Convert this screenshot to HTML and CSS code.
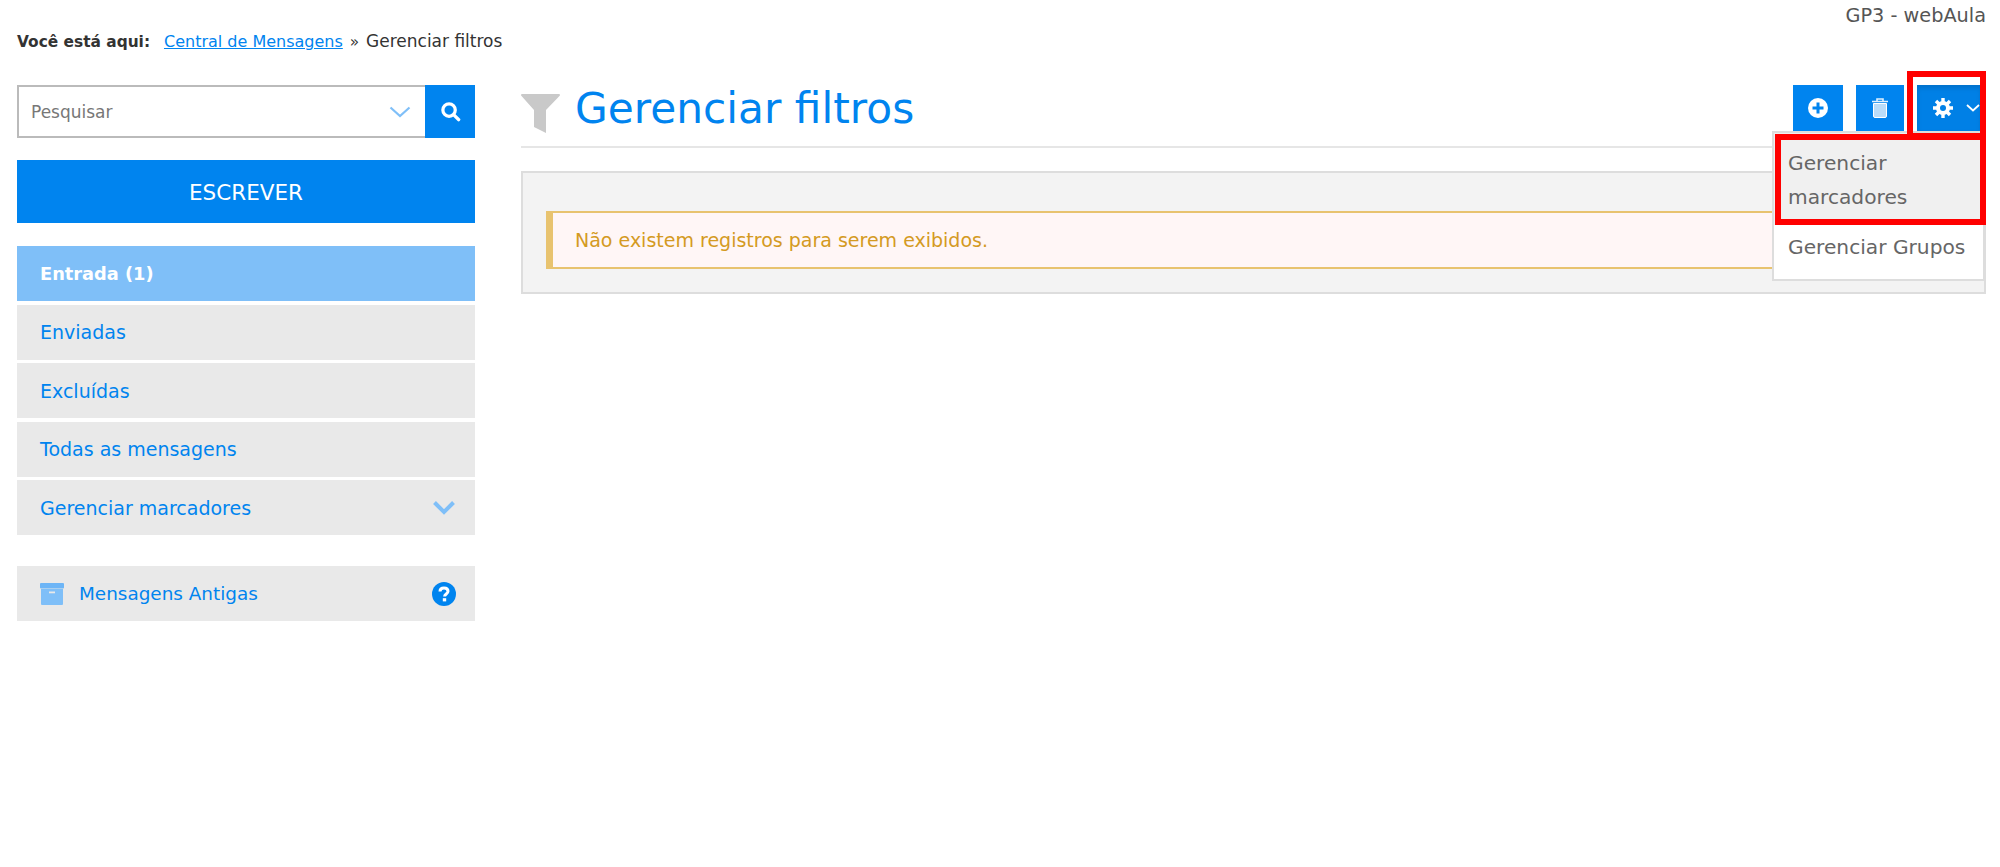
FILE: index.html
```html
<!DOCTYPE html>
<html lang="pt-BR">
<head>
    <meta charset="UTF-8">
    <meta name="viewport" content="width=device-width, initial-scale=1.0">
    <title>Gerenciar filtros</title>
    <link rel="stylesheet" href="styles.css">
</head>
<body>
    <div class="top-title">GP3 - webAula</div>
    <div class="breadcrumb">
        <strong>Você está aqui:</strong>
        <a href="#">Central de Mensagens</a>
        <span class="sep">»</span>
        <span class="current">Gerenciar filtros</span>
    </div>

    <div class="layout">
        <div class="sidebar">
            <div class="search">
                <div class="search-input">
                    <span>Pesquisar</span>
                    <svg class="search-arrow" width="22" height="12" viewBox="0 0 22 12"><path d="M1.5 1.5 L11 10 L20.5 1.5" fill="none" stroke="#7fbff8" stroke-width="2.2"/></svg>
                </div>
                <div class="search-btn">
                    <svg width="21" height="21" viewBox="0 0 22 22"><circle cx="9.5" cy="9.5" r="6.5" fill="none" stroke="#fff" stroke-width="3.4"/><path d="M14.5 14.5 L19.5 19.5" stroke="#fff" stroke-width="3.6" stroke-linecap="round"/></svg>
                </div>
            </div>

            <div class="write-btn">ESCREVER</div>

            <div class="menu">
                <div class="menu-item active">Entrada (1)</div>
                <div class="menu-item">Enviadas</div>
                <div class="menu-item">Excluídas</div>
                <div class="menu-item">Todas as mensagens</div>
                <div class="menu-item">
                    <span>Gerenciar marcadores</span>
                    <svg class="menu-arrow" width="24" height="16" viewBox="0 0 24 16"><path d="M2.5 2.5 L12 12 L21.5 2.5" fill="none" stroke="#7fbff8" stroke-width="4"/></svg>
                </div>
            </div>

            <div class="menu-item old">
                <svg class="box-icon" width="24" height="22" viewBox="0 0 24 22"><rect x="0" y="0" width="24" height="5.6" rx="1" fill="#6db5f6"/><path d="M1 6 H23 V21 a1 1 0 0 1 -1 1 H2 a1 1 0 0 1 -1 -1 Z" fill="#7fbff8"/><rect x="9" y="8.5" width="6" height="1.8" fill="#e9e9e9"/></svg>
                <span class="old-label">Mensagens Antigas</span>
                <svg class="help-icon" width="24" height="24" viewBox="0 0 24 24"><circle cx="12" cy="12" r="12" fill="#0084ef"/><path d="M8 9.5 C8 7 10 6 12 6 C14.5 6 16 7.5 16 9.3 C16 12 12.6 12 12.6 14.5" fill="none" stroke="#fff" stroke-width="3"/><rect x="10.8" y="16.2" width="3.4" height="3.2" fill="#fff"/></svg>
            </div>
        </div>

        <div class="main">
            <div class="page-head">
                <svg class="filter-icon" width="39" height="39" viewBox="0 0 39 39"><path d="M1 0 H38 a1 1 0 0 1 .7 1.7 L25 16 V39 L13 33 V16 L.3 1.7 A1 1 0 0 1 1 0 Z" fill="#c9c9c9"/></svg>
                <h1>Gerenciar filtros</h1>
                <div class="actions">
                    <div class="action-btn add">
                        <svg width="20" height="20" viewBox="0 0 20 20"><circle cx="10" cy="10" r="10" fill="#fff"/><path d="M10 4.5 V15.5 M4.5 10 H15.5" stroke="#0084ef" stroke-width="3"/></svg>
                    </div>
                    <div class="action-btn trash">
                        <svg width="18" height="20" viewBox="0 0 18 20"><path d="M1 3.5 H17 M6 3 V1 H12 V3" fill="none" stroke="#dff0fd" stroke-width="1.6"/><path d="M2.5 5.5 H15.5 V18 a1.5 1.5 0 0 1 -1.5 1.5 H4 a1.5 1.5 0 0 1 -1.5 -1.5 Z" fill="#b9dcf9" stroke="#fff" stroke-width="1"/></svg>
                    </div>
                    <div class="action-btn gear">
                        <svg width="20" height="20" viewBox="0 0 20 20"><circle cx="10" cy="10" r="5" fill="none" stroke="#fff" stroke-width="4"/><path d="M10 0 V20 M0 10 H20 M3 3 L17 17 M17 3 L3 17" stroke="#fff" stroke-width="3.4"/><circle cx="10" cy="10" r="3" fill="#0080e6"/></svg>
                        <svg width="14" height="8" viewBox="0 0 14 8"><path d="M1 1 L7 6.5 L13 1" fill="none" stroke="#fff" stroke-width="1.8"/></svg>
                    </div>
                </div>
            </div>

            <div class="panel">
                <div class="alert">Não existem registros para serem exibidos.</div>
            </div>
        </div>
    </div>

    <!-- dropdown aberto por cima da pagina -->
    <div class="dropdown">
        <div class="dropdown-item hover">Gerenciar marcadores</div>
        <div class="dropdown-item">Gerenciar Grupos</div>
    </div>

    <!-- marcacoes vermelhas do screenshot -->
    <div class="mark mark-gear"></div>
    <div class="mark mark-item"></div>
</body>
</html>
```

FILE: styles.css
```css
body {
    font-family: "DejaVu Sans", Arial, sans-serif;
    font-size: 15px;
    margin: 0;
    padding: 0 14px 0 17px;
    background-color: #fff;
    color: #333;
    height: 867px;
    box-sizing: border-box;
    overflow: hidden;
    position: relative;
}

.top-title {
    height: 30px;
    line-height: 31px;
    text-align: right;
    color: #555;
    font-size: 19.3px;
}

.breadcrumb {
    height: 22px;
    line-height: 22px;
    font-size: 15.4px;
    color: #333;
    white-space: nowrap;
}

.breadcrumb a {
    color: #0084ef;
    font-size: 16px;
    margin-left: 9px;
}

.breadcrumb .sep {
    margin: 0 2px;
}

.breadcrumb .current {
    font-size: 17px;
}

.layout {
    display: flex;
    margin-top: 33px;
    gap: 46px;
}

.sidebar {
    width: 458px;
    flex-shrink: 0;
}

.search {
    display: flex;
    height: 53px;
}

.search-input {
    flex: 1;
    display: flex;
    align-items: center;
    justify-content: space-between;
    border: 2px solid #bbb;
    border-right: none;
    padding: 0 14px 0 12px;
    color: #777;
    font-size: 17px;
}

.search-btn {
    width: 50px;
    background: #0084ef;
    display: flex;
    align-items: center;
    justify-content: center;
}

.write-btn {
    margin-top: 22px;
    height: 63px;
    line-height: 65px;
    background: #0084ef;
    color: white;
    text-align: center;
    font-size: 21.5px;
}

.menu {
    margin-top: 23px;
    display: flex;
    flex-direction: column;
    gap: 3.5px;
}

.menu-item {
    height: 55px;
    background: #e9e9e9;
    color: #0084ef;
    display: flex;
    align-items: center;
    justify-content: space-between;
    padding: 0 19px 0 23px;
    font-size: 19px;
}

.menu-item.active {
    background: #7fbff8;
    color: white;
    font-weight: bold;
    font-size: 17.8px;
}

.menu-item.old {
    margin-top: 31px;
    justify-content: flex-start;
}

.old-label {
    margin-left: 15px;
    flex: 1;
    font-size: 18.4px;
}

.main {
    flex: 1;
    min-width: 0;
}

.page-head {
    display: flex;
    align-items: center;
    height: 61px;
    border-bottom: 2px solid #e6e6e6;
}

.filter-icon {
    margin-bottom: 5px;
}

h1 {
    margin: 0 0 14px 15px;
    font-size: 42.3px;
    font-weight: normal;
    color: #0084ef;
}

.actions {
    margin-left: auto;
    display: flex;
    align-self: flex-start;
    gap: 13px;
    padding-right: 5px;
}

.action-btn {
    height: 46px;
    width: 50px;
    background: #0084ef;
    display: flex;
    align-items: center;
    justify-content: center;
}

.action-btn.trash {
    width: 48px;
}

.action-btn.gear {
    width: 64px;
    gap: 13px;
    padding-left: 16px;
    box-sizing: border-box;
    justify-content: flex-start;
    background: #0080e6;
    box-shadow: inset 0 3px 5px rgba(0,0,0,0.125);
}

.panel {
    margin-top: 23px;
    background: #f3f3f3;
    border: 2px solid #ddd;
    padding: 38px 24px 22px 23px;
    height: 123px;
    box-sizing: border-box;
}

.alert {
    height: 58px;
    line-height: 55px;
    box-sizing: border-box;
    background: #fff6f6;
    border: 2px solid #e8c36f;
    border-left-width: 7px;
    padding-left: 22px;
    color: #d49a22;
    font-size: 19px;
}

.dropdown {
    position: absolute;
    left: 1772px;
    top: 131px;
    width: 213px;
    height: 150px;
    box-sizing: border-box;
    background: white;
    border: 2px solid #ddd;
}

.dropdown-item {
    padding: 0 14px;
    font-size: 20.2px;
    line-height: 35px;
    color: #666;
}

.dropdown-item.hover {
    background: #f0f0f0;
    line-height: 34px;
    padding-top: 13px;
    padding-bottom: 11px;
    margin-bottom: 5px;
}

.mark {
    position: absolute;
    border: 6px solid #f00;
    box-sizing: border-box;
}

.mark-gear {
    left: 1907px;
    top: 71px;
    width: 79px;
    height: 68px;
}

.mark-item {
    left: 1775px;
    top: 134px;
    width: 211px;
    height: 91px;
}
```
